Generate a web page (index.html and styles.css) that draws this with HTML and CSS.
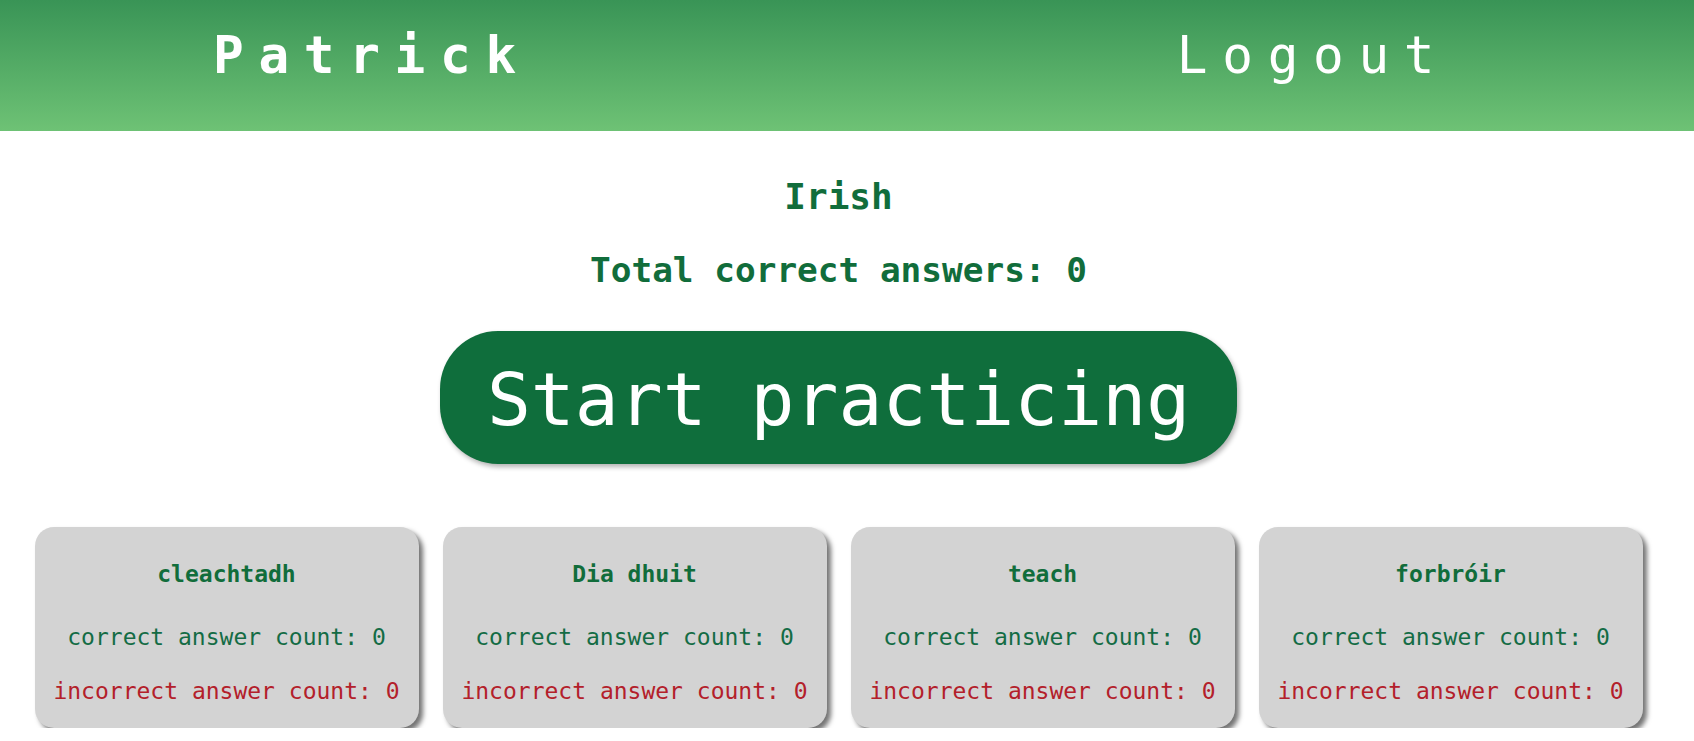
FILE: index.html
```html
<!DOCTYPE html>
<html lang="en">
<head>
<meta charset="utf-8">
<title>Irish practice</title>
<link rel="stylesheet" href="styles.css">
</head>
<body>
<header class="topbar">
  <div class="user">Patrick</div>
  <a class="logout" href="#">Logout</a>
</header>
<main class="main">
  <h2 class="lang">Irish</h2>
  <h2 class="total">Total correct answers: 0</h2>
  <button class="start">Start practicing</button>
  <section class="cards">
    <div class="card">
      <h3 class="word">cleachtadh</h3>
      <p class="ok">correct answer count: 0</p>
      <p class="bad">incorrect answer count: 0</p>
    </div>
    <div class="card">
      <h3 class="word">Dia dhuit</h3>
      <p class="ok">correct answer count: 0</p>
      <p class="bad">incorrect answer count: 0</p>
    </div>
    <div class="card">
      <h3 class="word">teach</h3>
      <p class="ok">correct answer count: 0</p>
      <p class="bad">incorrect answer count: 0</p>
    </div>
    <div class="card">
      <h3 class="word">forbróir</h3>
      <p class="ok">correct answer count: 0</p>
      <p class="bad">incorrect answer count: 0</p>
    </div>
  </section>
</main>
</body>
</html>
```

FILE: styles.css
```css
* { box-sizing: border-box; }

body {
  margin: 0;
  font-family: "DejaVu Sans Mono", "Liberation Mono", monospace;
  background: #ffffff;
  overflow: hidden;
}

.topbar {
  height: 131px;
  padding: 26px 0 0 213px;
  display: flex;
  align-items: flex-start;
  gap: 646px;
  background: linear-gradient(to bottom, #399456, #6ec275);
}

.user, .logout {
  font-size: 51px;
  line-height: normal;
  letter-spacing: 14.7px;
  color: #ffffff;
  text-decoration: none;
}

.user { font-weight: bold; }
.logout { font-weight: normal; }

.main {
  width: 1677px;
  display: flex;
  flex-direction: column;
  align-items: center;
  padding-top: 45px;
}

.lang, .total {
  margin: 0;
  line-height: normal;
  font-weight: bold;
  color: #116d3b;
}

.lang { font-size: 36px; }

.total {
  margin-top: 33px;
  font-size: 34.4px;
}

.start {
  margin-top: 41px;
  padding: 26px 47px 22px;
  border: none;
  border-radius: 58px;
  background: #0f6e3c;
  color: #ffffff;
  font-family: inherit;
  font-size: 73px;
  line-height: normal;
  box-shadow: 2px 3px 5px rgba(0, 0, 0, 0.3);
}

.cards {
  margin-top: 63px;
  display: flex;
  gap: 24px;
}

.card {
  width: 384px;
  height: 201px;
  padding-top: 34px;
  background: #d3d3d3;
  border-radius: 19px;
  box-shadow: 4px 4px 5px rgba(0, 0, 0, 0.55);
  display: flex;
  flex-direction: column;
  align-items: center;
}

.word, .ok, .bad {
  margin: 0;
  font-size: 23px;
  line-height: normal;
  white-space: nowrap;
}

.word {
  font-weight: bold;
  color: #116d3b;
}

.ok {
  margin-top: 37px;
  color: #146c45;
}

.bad {
  margin-top: 28px;
  color: #b3202a;
}
```
